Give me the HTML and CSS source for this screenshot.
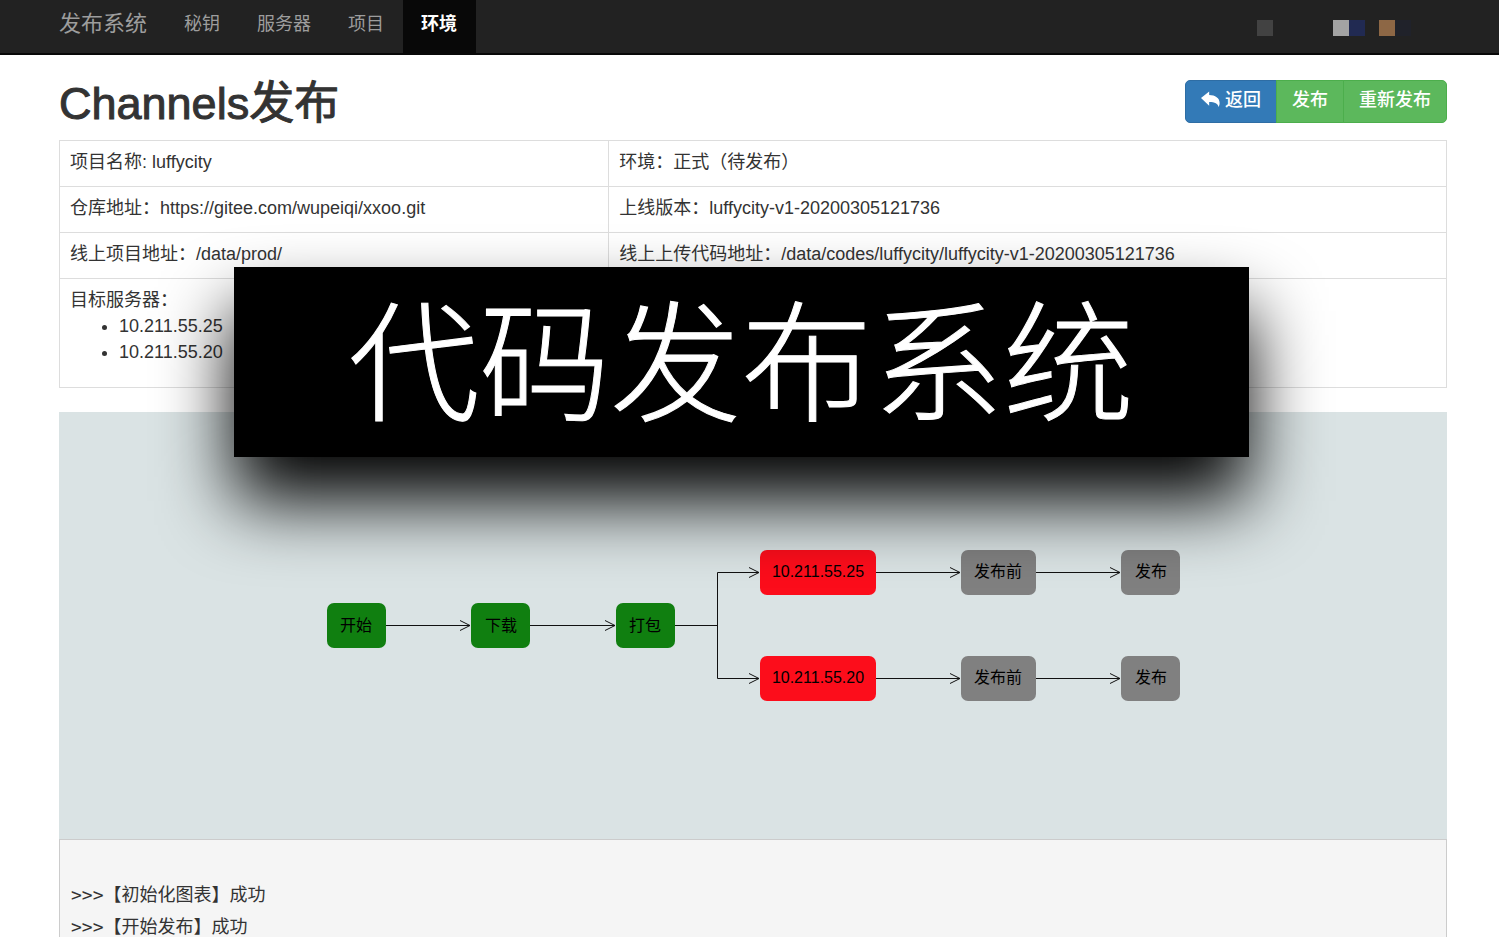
FILE: index.html
```html
<!DOCTYPE html>
<html lang="zh-CN">
<head>
<meta charset="utf-8">
<title>发布系统</title>
<link rel="stylesheet" href="styles.css">
</head>
<body>
<header class="navbar">
  <a class="brand" href="#">发布系统</a>
  <nav class="nav">
    <a href="#">秘钥</a>
    <a href="#">服务器</a>
    <a href="#">项目</a>
    <a class="active" href="#">环境</a>
  </nav>
  <div class="swatches" aria-hidden="true">
    <i class="sw sw-dim"></i><i class="sw sw-light"></i><i class="sw sw-navy"></i><i class="sw sw-tan"></i><i class="sw sw-ink"></i>
  </div>
</header>

<main class="container">
  <div class="page-head">
    <h1>Channels发布</h1>
    <div class="btn-group">
      <button class="btn btn-primary" type="button">
        <svg class="reply" viewBox="0 0 20 17" aria-hidden="true"><path d="M0 7 8.600 0v3.800c6.400 0 11 3.200 11 8.300 0 1.700-.5 3.200-1.200 4.400-.5-3.700-3.700-5.300-9.800-5.300V15z"/></svg>
        返回
      </button>
      <button class="btn btn-success" type="button">发布</button>
      <button class="btn btn-success" type="button">重新发布</button>
    </div>
  </div>

  <table class="info">
    <colgroup><col class="col-left"><col></colgroup>
    <tbody>
      <tr><td>项目名称: luffycity</td><td>环境：正式（待发布）</td></tr>
      <tr><td>仓库地址：https://gitee.com/wupeiqi/xxoo.git</td><td>上线版本：luffycity-v1-20200305121736</td></tr>
      <tr><td>线上项目地址：/data/prod/</td><td>线上上传代码地址：/data/codes/luffycity/luffycity-v1-20200305121736</td></tr>
      <tr><td colspan="2">目标服务器：
        <ul><li>10.211.55.25</li><li>10.211.55.20</li></ul>
      </td></tr>
    </tbody>
  </table>

  <section class="diagram">
    <svg viewBox="0 0 1388 427" role="img" aria-label="发布流程">
      <g class="links">
        <path d="M327 213.500H411M401 208.500l10 5-10 5"/>
        <path d="M471 213.500H556M546 208.500l10 5-10 5"/>
        <path d="M615 213.500H658.500M700 160.500H658.500V266.500H700M690 155.500l10 5-10 5M690 261.500l10 5-10 5"/>
        <path d="M817 160.500H901M891 155.500l10 5-10 5"/>
        <path d="M817 266.500H901M891 261.500l10 5-10 5"/>
        <path d="M977 160.500H1061M1051 155.500l10 5-10 5"/>
        <path d="M977 266.500H1061M1051 261.500l10 5-10 5"/>
      </g>
      <g class="done">
        <rect x="268" y="191" width="59" height="45" rx="7"/>
        <rect x="412" y="191" width="59" height="45" rx="7"/>
        <rect x="557" y="191" width="59" height="45" rx="7"/>
      </g>
      <g class="fail">
        <rect x="701" y="138" width="116" height="45" rx="7"/>
        <rect x="701" y="244" width="116" height="45" rx="7"/>
      </g>
      <g class="wait">
        <rect x="902" y="138" width="75" height="45" rx="7"/>
        <rect x="902" y="244" width="75" height="45" rx="7"/>
        <rect x="1062" y="138" width="59" height="45" rx="7"/>
        <rect x="1062" y="244" width="59" height="45" rx="7"/>
      </g>
      <g class="labels">
        <text x="297" y="219">开始</text>
        <text x="442" y="219">下载</text>
        <text x="586" y="219">打包</text>
        <text x="759" y="165">10.211.55.25</text>
        <text x="759" y="271">10.211.55.20</text>
        <text x="939" y="165">发布前</text>
        <text x="939" y="271">发布前</text>
        <text x="1092" y="165">发布</text>
        <text x="1092" y="271">发布</text>
      </g>
    </svg>
  </section>

  <section class="log">
    <p>&gt;&gt;&gt;【初始化图表】成功</p>
    <p>&gt;&gt;&gt;【开始发布】成功</p>
  </section>
</main>

<div class="banner">代码发布系统</div>
</body>
</html>
```
FILE: styles.css
```css
* { box-sizing: border-box; }

html, body { height: 100%; }

body {
  margin: 0;
  position: relative;
  overflow: hidden;
  background: #fff;
  color: #333;
  font: 18px/26px "Liberation Sans", "Noto Sans CJK SC", sans-serif;
}

.navbar {
  display: flex;
  padding: 0 88px 0 59px;
  background: #222;
  border-bottom: 2px solid #080808;
}

.navbar a {
  color: #9d9d9d;
  text-decoration: none;
}

.brand {
  padding: 11px 19px 16px 0;
  font-size: 22px;
}

.nav { display: flex; }

.nav a { padding: 11px 19px 16px 18px; }

.nav .active {
  background: #080808;
  color: #fff;
  font-weight: 700;
}

.swatches {
  display: flex;
  margin-left: auto;
  padding-top: 20px;
}

.sw {
  width: 16px;
  height: 16px;
}

.sw-dim { background: #424242; margin-right: 60px; }
.sw-light { background: #a3a3a3; }
.sw-navy { background: #212a52; margin-right: 14px; }
.sw-tan { background: #8d6745; }
.sw-ink { background: #20222a; }

.container { padding: 25px 52px 0 59px; }

.page-head {
  display: flex;
  justify-content: space-between;
  align-items: flex-start;
  margin-bottom: 12px;
}

h1 {
  margin: 0;
  font-size: 45px;
  line-height: 48px;
  font-weight: 400;
  -webkit-text-stroke: 1px #333;
}

.btn-group { display: flex; }

.btn {
  display: flex;
  align-items: center;
  gap: 5px;
  height: 43px;
  padding: 0 15px 4px;
  border: 1px solid;
  color: #fff;
  font: inherit;
  font-weight: 500;
}

.btn + .btn { margin-left: -1px; }
.btn:first-child { border-radius: 5px 0 0 5px; }
.btn:last-child { border-radius: 0 5px 5px 0; }
.btn-primary { background: #337ab7; border-color: #2e6da4; }
.btn-success { background: #5cb85c; border-color: #4cae4c; }

.reply {
  width: 19px;
  height: 17px;
  fill: #fff;
}

.info {
  width: 100%;
  border-collapse: collapse;
  margin-bottom: 24px;
}

.col-left { width: 39.6%; }

.info td {
  padding: 8px 10px 11px;
  border: 1px solid #ddd;
  vertical-align: top;
}

.info ul {
  margin: 0 0 11px;
  padding-left: 49px;
}

.diagram { background: #dae3e4; }

.diagram svg {
  display: block;
  width: 100%;
}

.links { fill: none; stroke: #111; }
.done { fill: #107f10; }
.fail { fill: #fc0d1b; }
.wait { fill: #808080; }

.labels {
  font-size: 16px;
  text-anchor: middle;
  fill: #000;
}

.log {
  height: 300px;
  padding: 39px 11px;
  background: #f5f5f5;
  border: 1px solid #ccc;
  font-family: "DejaVu Sans Mono", "Noto Sans CJK SC", monospace;
  line-height: 32px;
}

.log p { margin: 0; }

.banner {
  position: absolute;
  top: 267px;
  left: 15.6%;
  width: 67.7%;
  padding-bottom: 16px;
  background: #000;
  color: #fff;
  font-family: "Noto Sans CJK SC", sans-serif;
  font-size: 131px;
  font-weight: 300;
  line-height: 174px;
  text-align: center;
  white-space: nowrap;
  -webkit-text-stroke: 1px #fff;
  box-shadow: 0 44px 72px #000;
}
```
